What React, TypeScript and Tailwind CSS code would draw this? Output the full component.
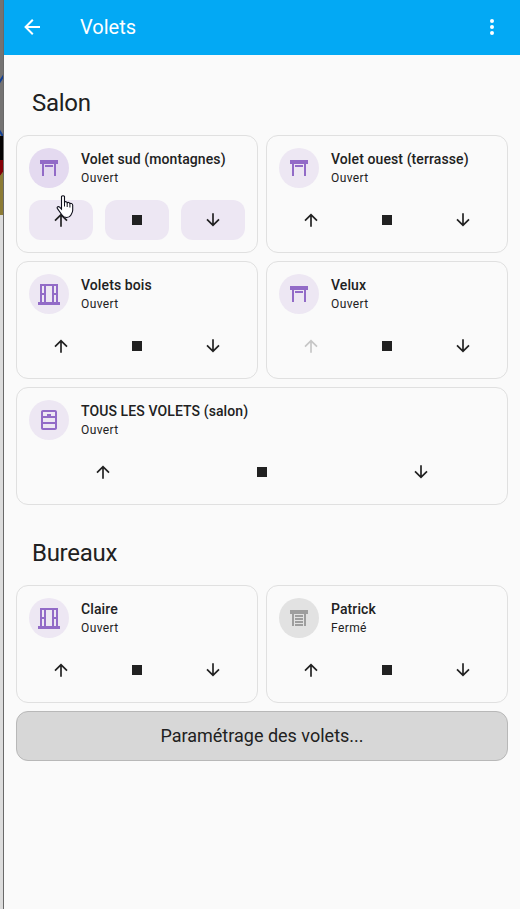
import React from "react";

const icons = {
  back: "M20,11V13H8L13.5,18.5L12.08,19.92L4.16,12L12.08,4.08L13.5,5.5L8,11H20Z",
  dots: "M12,16A2,2 0 0,1 14,18A2,2 0 0,1 12,20A2,2 0 0,1 10,18A2,2 0 0,1 12,16M12,10A2,2 0 0,1 14,12A2,2 0 0,1 12,14A2,2 0 0,1 10,12A2,2 0 0,1 12,10M12,4A2,2 0 0,1 14,6A2,2 0 0,1 12,8A2,2 0 0,1 10,6A2,2 0 0,1 12,4Z",
  up: "M13,20H11V8L5.5,13.5L4.08,12.08L12,4.16L19.92,12.08L18.5,13.5L13,8V20Z",
  down: "M11,4H13V16L18.5,10.5L19.92,11.92L12,19.84L4.08,11.92L5.5,10.5L11,16V4Z",
  stop: "M18,18H6V6H18V18Z",
  shutterOpen: "M3 4H21V8H19V20H17V8H7V20H5V8H3V4M8 9H16V11H8V9Z",
  shutter: "M3 4H21V8H19V20H17V8H7V20H5V8H3V4M8 9H16V11H8V9M8 12H16V14H8V12M8 15H16V17H8V15M8 18H16V20H8V18Z",
  wood: "M21 20V2H3V20H1V23H23V20M19 4V11H17V4M5 4H7V11H5M5 20V13H7V20M9 20V4H15V20M17 20V13H19V20Z",
  all: "M18 2H6C4.89 2 4 2.89 4 4V20C4 21.11 4.89 22 6 22H18C19.11 22 20 21.11 20 20V4C20 2.89 19.11 2 18 2M18 4V8H14V6H10V8H6V4H18M18 10V14H6V10H18M6 20V16H18V20H6Z",
};

function Icon({ name, className = "size-6" }: { name: keyof typeof icons; className?: string }) {
  return (
    <svg viewBox="0 0 24 24" fill="currentColor" className={className}>
      <path d={icons[name]} />
    </svg>
  );
}

type CardProps = {
  title: string;
  state?: string;
  icon: keyof typeof icons;
  wide?: boolean;
  filled?: boolean;
  closed?: boolean;
  upDisabled?: boolean;
};

function ShutterCard({ title, state = "Ouvert", icon, wide, filled, closed, upDisabled }: CardProps) {
  const tint = closed ? "bg-[#e2e2e2] text-[#9e9e9e]" : filled ? "bg-[#e4daf0] text-[#926bc7]" : "bg-[#ede7f3] text-[#926bc7]";
  const button = `flex h-10 flex-1 items-center justify-center rounded-xl ${filled ? "bg-[#ede7f3]" : ""}`;
  return (
    <div className={`h-[118px] rounded-xl border border-[#e0e0e0] p-3 ${wide ? "col-span-2" : ""}`}>
      <div className="flex h-10 gap-3">
        <div className={`flex size-10 shrink-0 items-center justify-center rounded-full ${tint}`}>
          <Icon name={icon} />
        </div>
        <div className="flex flex-col pt-px whitespace-nowrap">
          <div className="mb-px text-sm leading-5 font-medium tracking-[0.1px]">{title}</div>
          <div className="text-xs leading-4 tracking-[0.4px]">{state}</div>
        </div>
      </div>
      <div className="mt-3 flex gap-3">
        <div className={`${button} ${upDisabled ? "text-[#c6c6c6]" : ""}`}>
          <Icon name="up" className="size-5" />
        </div>
        <div className={button}>
          <Icon name="stop" className="size-5" />
        </div>
        <div className={button}>
          <Icon name="down" className="size-5" />
        </div>
      </div>
    </div>
  );
}

function Backdrop() {
  return (
    <div className="h-[909px] w-1 shrink-0 border-r border-[#696969] bg-[#dcdcdc]">
      <svg width="3" height="215" viewBox="0 0 3 215" className="block">
        <path fill="#747372" d="M0 0h3v215H0z" />
        <path stroke="#123f92" strokeWidth="2" d="M-1 83 4 75M-1 130 4 138" />
        <path fill="#050303" d="M0 136h3v25H0z" />
        <path fill="#850006" d="M0 160h3v12l-3 4z" />
        <path fill="#8c7b35" d="m0 176 3-4v43H0z" />
      </svg>
    </div>
  );
}

function Pointer() {
  return (
    <svg className="absolute top-[195px] left-[56px] h-[24px] w-[18px]" viewBox="0 0 18 24">
      <path
        d="M5.5 1.5C6 .4 8 .4 8.5 1.5V7c1-.7 2.3-.4 2.7.7 1-.6 2.2-.2 2.6.8 1.5-.5 2.9.3 2.9 1.8v5c0 2-.9 3.2-1.7 4.6-.9 1.6-2.2 2.6-4.2 2.6-2.2 0-3.8-.9-5-2.8L1.3 13.4c-.7-1.4 1.1-2.5 2.3-1.2l1.9 2z"
        fill="#fff"
        stroke="#10101c"
        strokeWidth="1.1"
      />
      <path d="M8.5 7v4.5M11.2 8v4M13.9 9v3.5" stroke="#10101c" fill="none" />
    </svg>
  );
}

export default function App() {
  return (
    <div className="relative flex h-[909px] w-[521px] overflow-hidden border-r border-white bg-[#fafafa] font-['Roboto',sans-serif] text-[#212121]">
      <Backdrop />
      <div className="min-w-0 flex-1">
        <header className="flex h-[55px] items-center bg-[#03a9f4] pr-4 pb-px pl-4 text-white">
          <Icon name="back" />
          <h1 className="ml-9 flex-1 text-xl">Volets</h1>
          <Icon name="dots" />
        </header>
        <main className="px-3">
          <h2 className="flex h-20 items-end px-4 pb-4 text-2xl leading-8 tracking-[-0.288px]">Salon</h2>
          <div className="grid grid-cols-2 gap-2">
            <ShutterCard title="Volet sud (montagnes)" icon="shutterOpen" filled />
            <ShutterCard title="Volet ouest (terrasse)" icon="shutterOpen" />
            <ShutterCard title="Volets bois" icon="wood" />
            <ShutterCard title="Velux" icon="shutterOpen" upDisabled />
            <ShutterCard title="TOUS LES VOLETS (salon)" icon="all" wide />
          </div>
          <h2 className="flex h-20 items-end px-4 pb-4 text-2xl leading-8 tracking-[-0.288px]">Bureaux</h2>
          <div className="grid grid-cols-2 gap-2">
            <ShutterCard title="Claire" icon="wood" />
            <ShutterCard title="Patrick" state="Fermé" icon="shutter" closed />
            <div className="col-span-2 flex h-[50px] items-center justify-center rounded-xl border border-[#b8b8b8] bg-[#d7d7d7] text-lg">
              Paramétrage des volets...
            </div>
          </div>
        </main>
      </div>
      <Pointer />
    </div>
  );
}
